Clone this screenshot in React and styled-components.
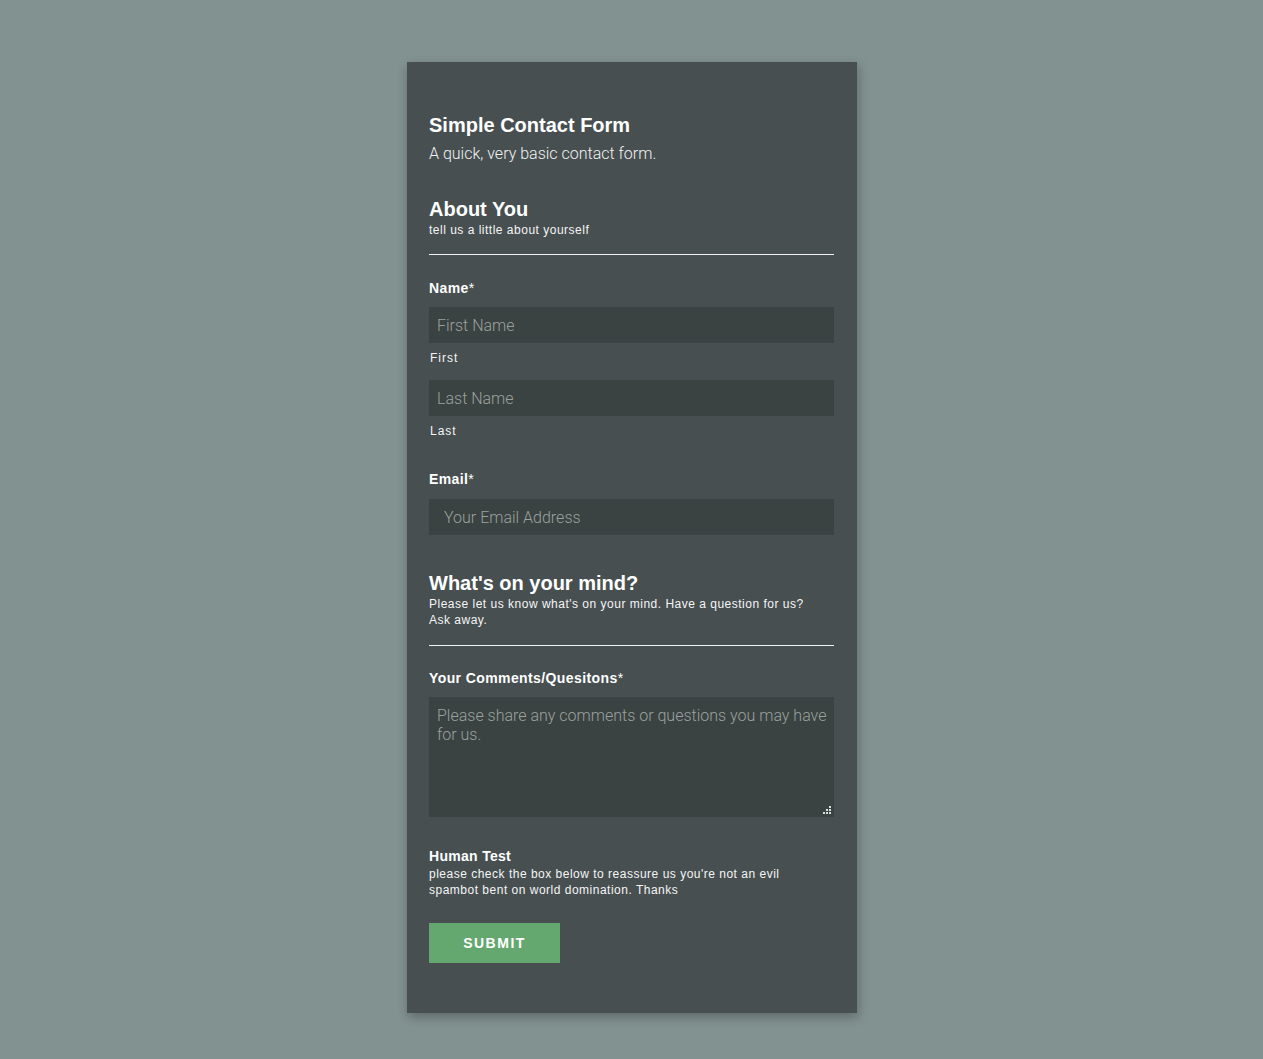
import React from "react";
import styled, { createGlobalStyle } from "styled-components";

const Global = createGlobalStyle`
  html, body { margin: 0; padding: 0; }
  body {
    background: #829291;
    font-family: "Liberation Sans", Arial, sans-serif;
    min-height: 1059px;
  }
  * { box-sizing: border-box; }
`;

const lightFont = `"Roboto", "Liberation Sans", Arial, sans-serif`;

const Page = styled.div`
  display: flex;
  justify-content: center;
  padding-top: 62px;
  padding-bottom: 46px;
  padding-left: 1px;
`;

const Card = styled.form`
  width: 450px;
  background: #474f51;
  padding: 50px 23px 50px 22px;
  box-shadow: 1px 4px 10px rgba(0, 0, 0, 0.28);
  color: #fff;
  display: flex;
  flex-direction: column;
`;

const Title = styled.h1`
  margin: 0;
  font-size: 20px;
  font-weight: bold;
  line-height: 26px;
`;

const Lead = styled.p`
  margin: 6px 0 0;
  font-family: ${lightFont};
  font-size: 16px;
  line-height: 20px;
  font-weight: 300;
  color: #f2f2f2;
`;

const Section = styled.div`
  margin-top: ${(p) => p.$top}px;
  padding-bottom: ${(p) => p.$bottom ?? 16}px;
  border-bottom: 1px solid #f2f2f2;
`;

const SectionTitle = styled.h2`
  margin: 0 0 2px;
  font-size: 20px;
  font-weight: bold;
  line-height: 22px;
`;

const SectionDesc = styled.p`
  margin: 0;
  max-width: 382px;
  font-size: 12px;
  line-height: 16px;
  letter-spacing: 0.5px;
  color: #f5f5f5;
`;

const Field = styled.div`
  display: flex;
  flex-direction: column;
  margin-top: ${(p) => p.$top}px;
`;

const Label = styled.label`
  font-size: 14px;
  font-weight: bold;
  line-height: 16px;
  letter-spacing: 0.4px;
  margin-bottom: ${(p) => p.$gap ?? 12}px;
`;

const Star = styled.span`
  font-weight: normal;
`;

const Input = styled.input`
  height: 36px;
  width: 100%;
  border: none;
  outline: none;
  background: #3a4341;
  color: #fff;
  font-family: ${lightFont};
  font-size: 16px;
  font-weight: 300;
  padding: 0 ${(p) => p.$indent ?? 8}px;
  margin-top: ${(p) => p.$top ?? 0}px;
  &::placeholder { color: #9ca19f; }
`;

const SubLabel = styled.span`
  font-size: 12px;
  line-height: 16px;
  letter-spacing: 1px;
  margin: 7px 0 0 1px;
  color: #f5f5f5;
`;

const AreaWrap = styled.div`
  position: relative;
`;

const TextArea = styled.textarea`
  height: 120px;
  width: 100%;
  border: none;
  outline: none;
  background: #3a4341;
  color: #fff;
  font-family: ${lightFont};
  font-size: 16px;
  line-height: 19px;
  font-weight: 300;
  padding: 9px 3px 8px 8px;
  resize: none;
  display: block;
  &::placeholder { color: #9ca19f; }
`;

const Grip = styled.svg`
  position: absolute;
  right: 3px;
  bottom: 3px;
  width: 8px;
  height: 8px;
  pointer-events: none;
`;

const Human = styled.div`
  margin-top: 30px;
  display: flex;
  flex-direction: column;
`;

const HumanTitle = styled.div`
  font-size: 14px;
  font-weight: bold;
  line-height: 19px;
  letter-spacing: 0.3px;
`;

const Submit = styled.button`
  margin-top: 25px;
  align-self: flex-start;
  width: 131px;
  height: 40px;
  border: none;
  background: #64a86f;
  color: #fff;
  font-family: inherit;
  font-size: 14px;
  font-weight: bold;
  letter-spacing: 1.5px;
  cursor: pointer;
`;

export default function App() {
  return (
    <>
      <Global />
      <Page>
        <Card onSubmit={(e) => e.preventDefault()}>
          <Title>Simple Contact Form</Title>
          <Lead>A quick, very basic contact form.</Lead>

          <Section $top={34}>
            <SectionTitle>About You</SectionTitle>
            <SectionDesc>tell us a little about yourself</SectionDesc>
          </Section>

          <Field $top={25}>
            <Label $gap={11}>Name<Star>*</Star></Label>
            <Input placeholder="First Name" />
            <SubLabel>First</SubLabel>
            <Input placeholder="Last Name" $top={14} />
            <SubLabel>Last</SubLabel>
          </Field>

          <Field $top={32}>
            <Label>Email<Star>*</Star></Label>
            <Input placeholder="Your Email Address" $indent={15} />
          </Field>

          <Section $top={37} $bottom={17}>
            <SectionTitle>What's on your mind?</SectionTitle>
            <SectionDesc>
              Please let us know what's on your mind. Have a question for us?
              Ask away.
            </SectionDesc>
          </Section>

          <Field $top={24}>
            <Label $gap={11}>Your Comments/Quesitons<Star>*</Star></Label>
            <AreaWrap>
              <TextArea placeholder="Please share any comments or questions you may have for us." />
              <Grip viewBox="0 0 8 8" aria-hidden="true">
                <g fill="#d9dcdb">
                  <rect x="6" y="0" width="2" height="2" />
                  <rect x="3" y="3" width="2" height="2" />
                  <rect x="6" y="3" width="2" height="2" />
                  <rect x="0" y="6" width="2" height="2" />
                  <rect x="3" y="6" width="2" height="2" />
                  <rect x="6" y="6" width="2" height="2" />
                </g>
              </Grip>
            </AreaWrap>
          </Field>

          <Human>
            <HumanTitle>Human Test</HumanTitle>
            <SectionDesc>
              please check the box below to reassure us you're not an evil
              spambot bent on world domination. Thanks
            </SectionDesc>
          </Human>

          <Submit type="submit">SUBMIT</Submit>
        </Card>
      </Page>
    </>
  );
}
